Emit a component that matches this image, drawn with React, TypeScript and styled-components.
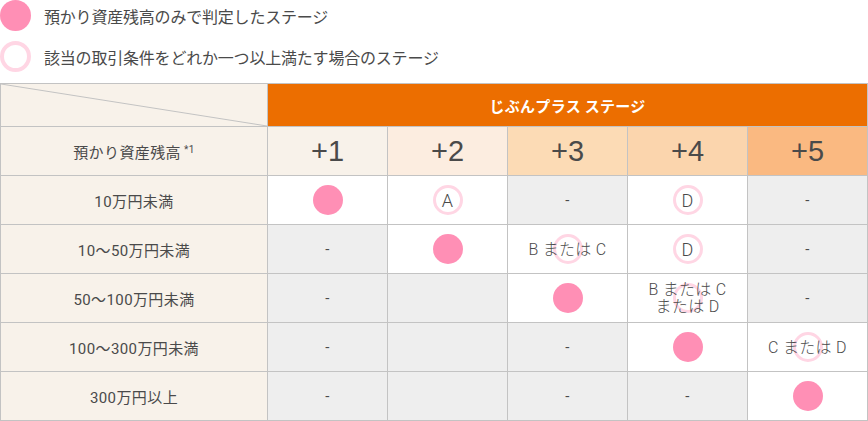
import React from 'react';
import styled, { createGlobalStyle } from 'styled-components';

const GlobalStyle = createGlobalStyle`
    body {
        margin: 0;
        background: #ffffff;
        font-family: "Noto Sans CJK JP", "Noto Sans", sans-serif;
        color: #4a4a4a;
    }
`

const Page = styled.div`
    width: 868px;
    display: flex;
    flex-direction: column;
    gap: 11px;
`

const Legend = styled.div`
    display: flex;
    flex-direction: column;
    gap: 10px;
`

const LegendRow = styled.div`
    display: flex;
    align-items: center;
    gap: 13px;
    height: 31px;
    font-size: 16px;
    letter-spacing: -0.2px;
`

const Dot = styled.span<{ $ring?: boolean }>`
    display: block;
    flex: none;
    box-sizing: border-box;
    width: 31px;
    height: 31px;
    border-radius: 50%;
    background: ${props => props.$ring ? 'transparent' : '#ff8fb5'};
    border: ${props => props.$ring ? '4px solid #ffd6e4' : 'none'};
`

const Grid = styled.div`
    display: grid;
    grid-template-columns: 266px repeat(5, 119px);
    grid-template-rows: 42px repeat(6, 48px);
    gap: 1px;
    padding: 1px;
    background: #c3c3c3;
    width: 866px;
`

const Corner = styled.div`
    position: relative;
    background: #f8f2ea;
    svg {
        position: absolute;
        inset: 0;
    }
`

const Banner = styled.div`
    grid-column: span 5;
    background: #ec6e00;
    color: #ffffff;
    font-size: 15px;
    font-weight: 700;
    display: flex;
    align-items: center;
    justify-content: center;
    letter-spacing: 0.3px;
`

const Label = styled.div`
    background: #f8f2ea;
    display: flex;
    align-items: center;
    justify-content: center;
    font-family: Roboto, "Noto Sans CJK JP", sans-serif;
    font-size: 15px;
    letter-spacing: 0.4px;
    sup {
        font-size: 10px;
        margin-left: 3px;
        position: relative;
        top: -2px;
    }
`

const Stage = styled.div<{ $bg: string }>`
    background: ${props => props.$bg};
    display: flex;
    align-items: center;
    justify-content: center;
    font-family: "Liberation Sans", Arial, sans-serif;
    font-size: 29px;
    color: #4a4a4a;
`

const Cell = styled.div<{ $on?: boolean }>`
    position: relative;
    background: ${props => props.$on ? '#ffffff' : '#eeeeee'};
    display: flex;
    align-items: center;
    justify-content: center;
    font-family: Roboto, "Noto Sans CJK JP", sans-serif;
    font-size: 15px;
    line-height: 17px;
    letter-spacing: 0.3px;
    text-align: center;
`

const CellText = styled.span<{ $big?: boolean }>`
    position: relative;
    white-space: pre-line;
    font-size: ${props => props.$big ? '18px' : '16px'};
    font-weight: 300;
`

const Ring = styled.span`
    position: absolute;
    left: 50%;
    top: 50%;
    width: 30px;
    height: 30px;
    box-sizing: border-box;
    margin: -15px 0 0 -15px;
    border-radius: 50%;
    border: 3px solid #ffd6e4;
`

const CellDot = styled.span`
    width: 30px;
    height: 30px;
    border-radius: 50%;
    background: #ff8fb5;
`

type Mark = 'fill' | 'dash' | 'none' | string

const stages = [
    { label: '+1', bg: '#f8f2ea' },
    { label: '+2', bg: '#fcede0' },
    { label: '+3', bg: '#fcdbb5' },
    { label: '+4', bg: '#fbd5ad' },
    { label: '+5', bg: '#fab981' },
]

const rows: { label: string; marks: Mark[] }[] = [
    { label: '10万円未満', marks: ['fill', 'A', 'dash', 'D', 'dash'] },
    { label: '10〜50万円未満', marks: ['dash', 'fill', 'B または C', 'D', 'dash'] },
    { label: '50〜100万円未満', marks: ['dash', 'none', 'fill', 'B または C\nまたは D', 'dash'] },
    { label: '100〜300万円未満', marks: ['dash', 'none', 'dash', 'fill', 'C または D'] },
    { label: '300万円以上', marks: ['dash', 'none', 'dash', 'dash', 'fill'] },
]

const MarkCell: React.FC<{ mark: Mark }> = ({ mark }) => {
    if (mark === 'fill') return <Cell $on><CellDot /></Cell>
    if (mark === 'dash') return <Cell>-</Cell>
    if (mark === 'none') return <Cell />
    return (
        <Cell $on>
            <Ring />
            <CellText $big={mark.length === 1}>{mark}</CellText>
        </Cell>
    )
}

const App: React.FC = () => {
    return (
        <>
        <GlobalStyle />
        <Page>
            <Legend>
                <LegendRow><Dot />預かり資産残高のみで判定したステージ</LegendRow>
                <LegendRow><Dot $ring />該当の取引条件をどれか一つ以上満たす場合のステージ</LegendRow>
            </Legend>
            <Grid>
                <Corner>
                    <svg width="266" height="42" viewBox="0 0 266 42">
                        <line x1="0" y1="0" x2="266" y2="42" stroke="#c3c3c3" strokeWidth="1" />
                    </svg>
                </Corner>
                <Banner>じぶんプラス ステージ</Banner>
                <Label>預かり資産残高<sup>*1</sup></Label>
                {stages.map(s => <Stage key={s.label} $bg={s.bg}>{s.label}</Stage>)}
                {rows.map(r => (
                    <React.Fragment key={r.label}>
                        <Label>{r.label}</Label>
                        {r.marks.map((m, i) => <MarkCell key={i} mark={m} />)}
                    </React.Fragment>
                ))}
            </Grid>
        </Page>
        </>
    )
}

export default App
